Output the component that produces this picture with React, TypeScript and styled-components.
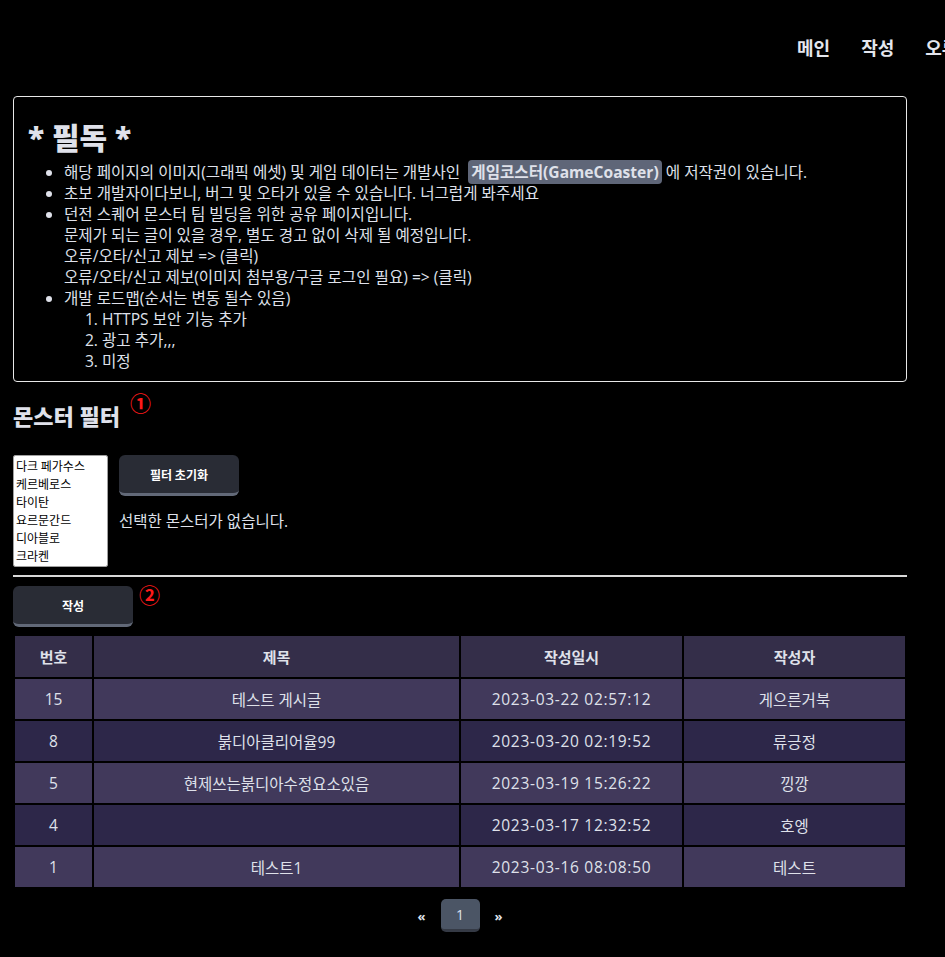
import styled, { createGlobalStyle } from 'styled-components'

const posts = [
  { id: 15, title: '테스트 게시글', date: '2023-03-22 02:57:12', author: '게으른거북' },
  { id: 8, title: '붉디아클리어율99', date: '2023-03-20 02:19:52', author: '류긍정' },
  { id: 5, title: '현제쓰는붉디아수정요소있음', date: '2023-03-19 15:26:22', author: '낑깡' },
  { id: 4, title: '', date: '2023-03-17 12:32:52', author: '호엥' },
  { id: 1, title: '테스트1', date: '2023-03-16 08:08:50', author: '테스트' },
]

const monsters = ['다크 페가수스', '케르베로스', '타이탄', '요르문간드', '디아블로', '크라켄', '바하무트']

const App = () => (
  <>
    <GlobalStyle />
    <Nav>
      <NavLink>메인</NavLink>
      <NavLink>작성</NavLink>
      <NavLink>오류제보</NavLink>
    </Nav>
    <Main>
      <Notice>
        <NoticeTitle>* 필독 *</NoticeTitle>
        <NoticeList>
          <li>
            해당 페이지의 이미지(그래픽 에셋) 및 게임 데이터는 개발사인&nbsp;{' '}
            <Mark>게임코스터(GameCoaster)</Mark> 에 저작권이 있습니다.
          </li>
          <li>초보 개발자이다보니, 버그 및 오타가 있을 수 있습니다. 너그럽게 봐주세요</li>
          <li>
            던전 스퀘어 몬스터 팀 빌딩을 위한 공유 페이지입니다.
            <br />
            문제가 되는 글이 있을 경우, 별도 경고 없이 삭제 될 예정입니다.
            <br />
            오류/오타/신고 제보 =&gt; (클릭)
            <br />
            오류/오타/신고 제보(이미지 첨부용/구글 로그인 필요) =&gt; (클릭)
          </li>
          <li>
            개발 로드맵(순서는 변동 될수 있음)
            <RoadMap>
              <li>HTTPS 보안 기능 추가</li>
              <li>광고 추가,,,</li>
              <li>미정</li>
            </RoadMap>
          </li>
        </NoticeList>
      </Notice>

      <SectionTitle>
        몬스터 필터<Marker $gap={10} $shift={-9}>①</Marker>
      </SectionTitle>
      <FilterRow>
        <MonsterSelect multiple size={6}>
          {monsters.map(m => (
            <option key={m}>{m}</option>
          ))}
        </MonsterSelect>
        <FilterSide>
          <Button>필터 초기화</Button>
          <Empty>선택한 몬스터가 없습니다.</Empty>
        </FilterSide>
      </FilterRow>
      <Divider />
      <WriteRow>
        <Button>작성</Button>
        <Marker $gap={6} $shift={-2}>②</Marker>
      </WriteRow>

      <Board>
        <colgroup>
          <col width={77} />
          <col width={365} />
          <col width={221} />
          <col width={221} />
        </colgroup>
        <thead>
          <tr>
            <Th>번호</Th>
            <Th>제목</Th>
            <Th>작성일시</Th>
            <Th>작성자</Th>
          </tr>
        </thead>
        <tbody>
          {posts.map((p, i) => (
            <Row key={p.id} $odd={i % 2 === 0}>
              <Td>{p.id}</Td>
              <Td>{p.title}</Td>
              <DateCell>{p.date}</DateCell>
              <Td>{p.author}</Td>
            </Row>
          ))}
        </tbody>
      </Board>

      <Pager>
        <PageArrow>«</PageArrow>
        <PageButton>1</PageButton>
        <PageArrow>»</PageArrow>
      </Pager>
    </Main>
  </>
)

const GlobalStyle = createGlobalStyle`
  html, body {
    background: #000000;
    margin: 0;
    overflow-x: hidden;
  }
  body {
    color: #dfe1ea;
    font-family: "Open Sans", "Noto Sans CJK KR", sans-serif;
  }
`

const Nav = styled.nav`
  align-items: center;
  box-sizing: border-box;
  column-gap: 31px;
  display: flex;
  height: 96px;
  padding-bottom: 2px;
  padding-left: 797px;
  white-space: nowrap;
`

const NavLink = styled.a`
  color: #e4e6ee;
  font-size: 18px;
  font-weight: 700;
`

const Main = styled.main`
  box-sizing: border-box;
  padding: 0 38px 40px 13px;
  width: 945px;
`

const Notice = styled.section`
  border: 1px solid #e8e8e8;
  border-radius: 4px;
  padding: 24px 14px 9px;
`

const NoticeTitle = styled.h1`
  font-size: 30px;
  font-weight: 900;
  line-height: 34px;
  margin: 0 0 7px;
`

const NoticeList = styled.ul`
  font-size: 15.6px;
  line-height: 21px;
  margin: 0;
  padding-left: 36px;
`

const RoadMap = styled.ol`
  margin: 0;
  padding-left: 38px;
`

const Mark = styled.span`
  background-color: #5f6678;
  border-radius: 4px;
  font-weight: 700;
  padding: 1px 3px;
`

const SectionTitle = styled.h2`
  font-size: 22px;
  font-weight: 900;
  line-height: 30px;
  margin: 19px 0 0;
`

const Marker = styled.span<{ $gap: number; $shift: number }>`
  color: #ff1a1a;
  display: inline-block;
  font-size: 21px;
  font-weight: 700;
  line-height: 22px;
  margin-left: ${p => p.$gap}px;
  transform: translateY(${p => p.$shift}px);
  vertical-align: top;
`

const FilterRow = styled.div`
  column-gap: 11px;
  display: flex;
  margin-top: 24px;
`

const MonsterSelect = styled.select`
  background: #ffffff;
  border: 1px solid #a0a0a0;
  box-sizing: border-box;
  color: #000000;
  font-family: "Noto Sans CJK KR", sans-serif;
  font-size: 12px;
  font-weight: 500;
  height: 112px;
  padding: 0 0 0 2px;
  width: 95px;
  option {
    padding: 1px 0 0;
  }
  &::-webkit-scrollbar {
    width: 15px;
  }
  &::-webkit-scrollbar-track {
    background: #f1f1f1;
  }
  &::-webkit-scrollbar-thumb {
    background: #c1c1c1;
    border: 2px solid #f1f1f1;
  }
  &::-webkit-scrollbar-button:single-button {
    background: #f1f1f1;
    display: block;
    height: 15px;
  }
`

const FilterSide = styled.div`
  display: flex;
  flex-direction: column;
  row-gap: 14px;
`

const Button = styled.button`
  background-color: #292c35;
  border: none;
  border-bottom: 3px solid #626978;
  border-radius: 6px;
  color: #ffffff;
  font-family: "Noto Sans CJK KR", sans-serif;
  font-size: 12px;
  font-weight: 700;
  height: 41px;
  width: 120px;
`

const Empty = styled.p`
  font-size: 15.5px;
  line-height: 22px;
  margin: 0;
`

const Divider = styled.hr`
  border: none;
  border-top: 2px solid #d8d8d8;
  margin: 8px 0 0;
`

const WriteRow = styled.div`
  align-items: flex-start;
  display: flex;
  margin-top: 9px;
`

const Board = styled.table`
  border-spacing: 2px;
  margin-top: 7px;
  table-layout: fixed;
  width: 894px;
`

const Th = styled.th`
  background-color: #342e49;
  font-size: 15px;
  font-weight: 700;
  height: 41px;
  padding: 0;
  text-align: center;
`

const Row = styled.tr<{ $odd: boolean }>`
  background-color: ${p => (p.$odd ? '#41395b' : '#2d2749')};
`

const Td = styled.td`
  font-size: 15.5px;
  height: 40px;
  padding: 0;
  text-align: center;
`

const DateCell = styled(Td)`
  letter-spacing: 0.7px;
`

const Pager = styled.div`
  align-items: center;
  column-gap: 15px;
  display: flex;
  justify-content: center;
  margin-top: 10px;
`

const PageArrow = styled.span`
  font-size: 13px;
  font-weight: 700;
`

const PageButton = styled.span`
  align-items: center;
  background-color: #4b5565;
  border-bottom: 3px solid #353a45;
  border-radius: 5px;
  display: flex;
  font-size: 14px;
  height: 30px;
  justify-content: center;
  width: 39px;
`

export default App
